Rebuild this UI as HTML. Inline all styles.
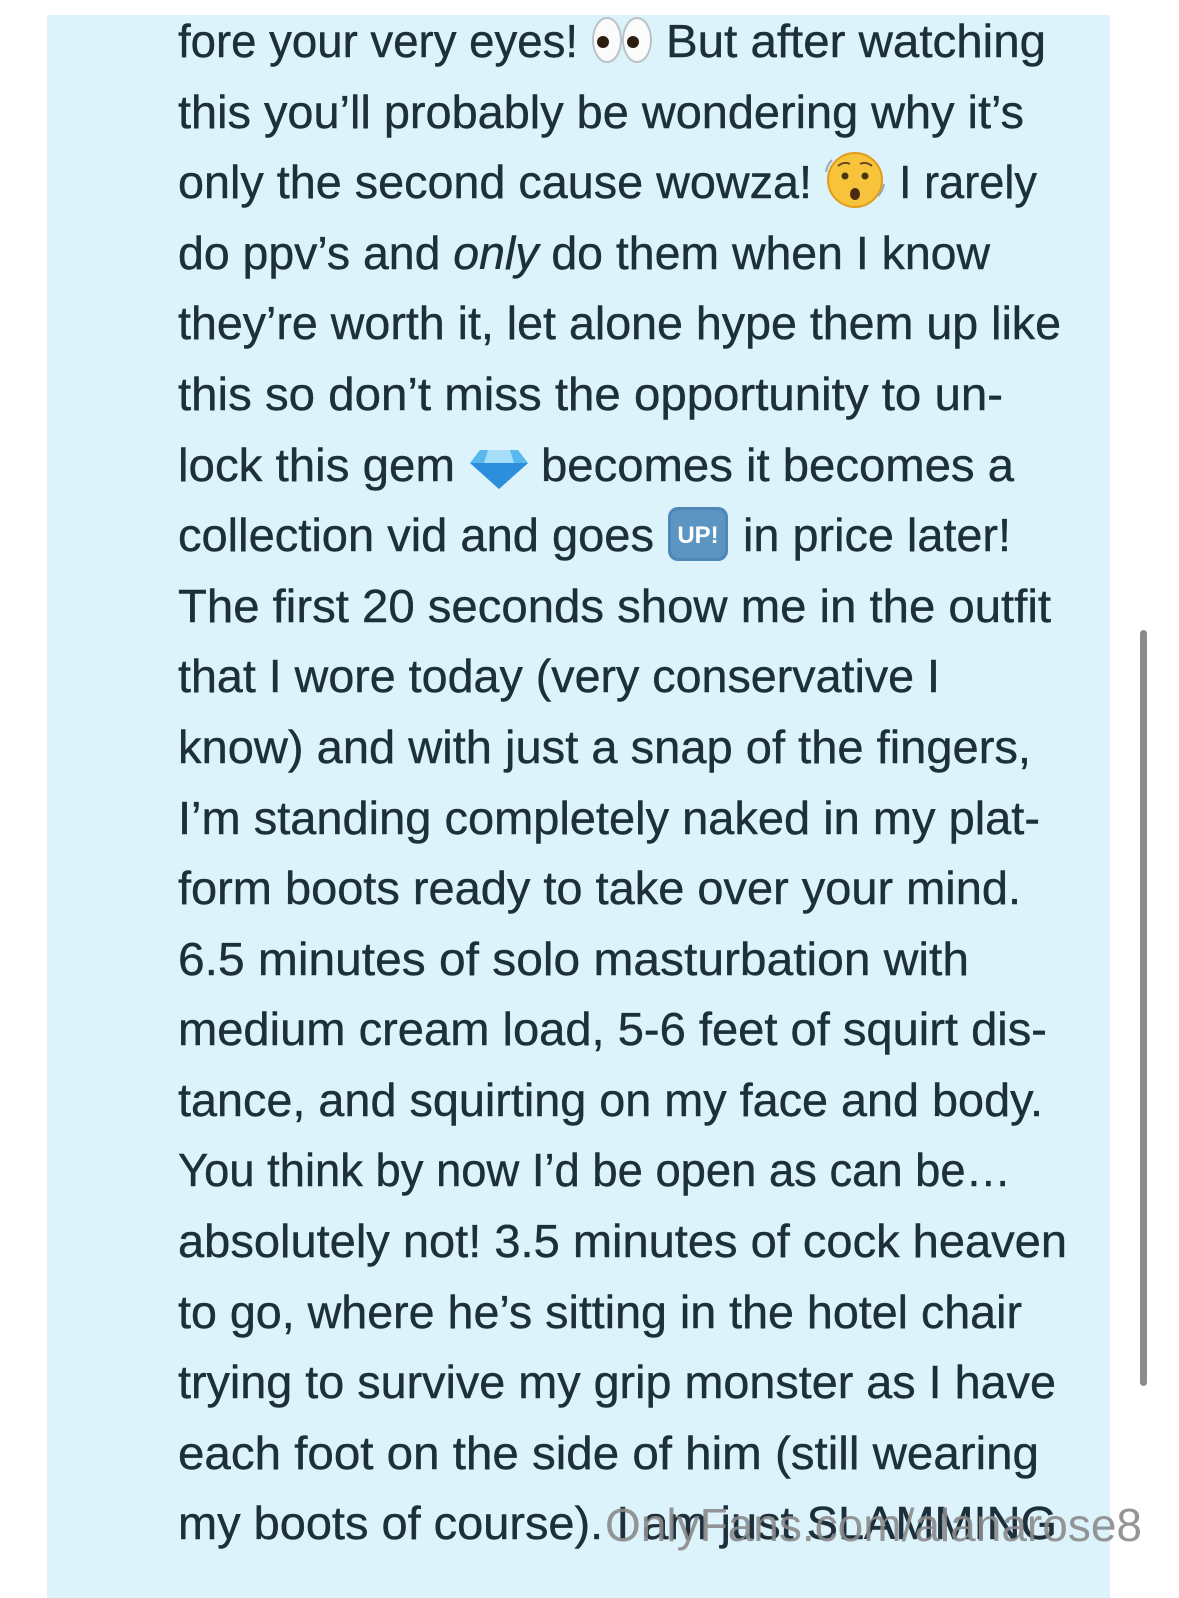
<!DOCTYPE html>
<html><head><meta charset="utf-8"><style>
html,body{margin:0;padding:0;background:#fff;}
body{width:1179px;height:1598px;overflow:hidden;position:relative;}
svg{position:absolute;left:0;top:0;}
</style></head><body>
<svg width="1179" height="1598" viewBox="0 0 1179 1598" xmlns="http://www.w3.org/2000/svg">
<rect x="47" y="15" width="1063" height="1583" fill="#dcf3fc"/>
<rect x="1140" y="630" width="7" height="756" rx="3.5" fill="#8c8c8c"/>
<g font-family="Liberation Sans, sans-serif" font-size="46" fill="#1d2f3a" stroke="#1d2f3a" stroke-width="0.4">
<text x="178" y="57" textLength="400" lengthAdjust="spacingAndGlyphs">fore your very eyes!</text>
<text x="666" y="57" textLength="380" lengthAdjust="spacingAndGlyphs">But after watching</text>
<text x="178" y="128" textLength="846" lengthAdjust="spacingAndGlyphs">this you’ll probably be wondering why it’s</text>
<text x="178" y="198" textLength="634" lengthAdjust="spacingAndGlyphs">only the second cause wowza!</text>
<text x="899" y="198" textLength="138" lengthAdjust="spacingAndGlyphs">I rarely</text>
<text x="178" y="269" textLength="812" lengthAdjust="spacingAndGlyphs">do ppv’s and <tspan font-style="italic">only</tspan> do them when I know</text>
<text x="178" y="339" textLength="883" lengthAdjust="spacingAndGlyphs">they’re worth it, let alone hype them up like</text>
<text x="178" y="410" textLength="825" lengthAdjust="spacingAndGlyphs">this so don’t miss the opportunity to un-</text>
<text x="178" y="481" textLength="277" lengthAdjust="spacingAndGlyphs">lock this gem</text>
<text x="541" y="481" textLength="473" lengthAdjust="spacingAndGlyphs">becomes it becomes a</text>
<text x="178" y="551" textLength="476" lengthAdjust="spacingAndGlyphs">collection vid and goes</text>
<text x="743" y="551" textLength="268" lengthAdjust="spacingAndGlyphs">in price later!</text>
<text x="178" y="622" textLength="873" lengthAdjust="spacingAndGlyphs">The first 20 seconds show me in the outfit</text>
<text x="178" y="692" textLength="762" lengthAdjust="spacingAndGlyphs">that I wore today (very conservative I</text>
<text x="178" y="763" textLength="853" lengthAdjust="spacingAndGlyphs">know) and with just a snap of the fingers,</text>
<text x="178" y="834" textLength="862" lengthAdjust="spacingAndGlyphs">I’m standing completely naked in my plat-</text>
<text x="178" y="904" textLength="843" lengthAdjust="spacingAndGlyphs">form boots ready to take over your mind.</text>
<text x="178" y="975" textLength="791" lengthAdjust="spacingAndGlyphs">6.5 minutes of solo masturbation with</text>
<text x="178" y="1045" textLength="869" lengthAdjust="spacingAndGlyphs">medium cream load, 5-6 feet of squirt dis-</text>
<text x="178" y="1116" textLength="865" lengthAdjust="spacingAndGlyphs">tance, and squirting on my face and body.</text>
<text x="178" y="1186" textLength="833" lengthAdjust="spacingAndGlyphs">You think by now I’d be open as can be…</text>
<text x="178" y="1257" textLength="889" lengthAdjust="spacingAndGlyphs">absolutely not! 3.5 minutes of cock heaven</text>
<text x="178" y="1328" textLength="844" lengthAdjust="spacingAndGlyphs">to go, where he’s sitting in the hotel chair</text>
<text x="178" y="1398" textLength="878" lengthAdjust="spacingAndGlyphs">trying to survive my grip monster as I have</text>
<text x="178" y="1469" textLength="861" lengthAdjust="spacingAndGlyphs">each foot on the side of him (still wearing</text>
<text x="178" y="1539" textLength="879" lengthAdjust="spacingAndGlyphs">my boots of course). I am just SLAMMING</text>
</g>
<g>
<ellipse cx="607" cy="40" rx="14" ry="22" fill="#fbfbfb" stroke="#b9c3c8" stroke-width="2"/>
<ellipse cx="637" cy="40" rx="14" ry="22" fill="#fbfbfb" stroke="#b9c3c8" stroke-width="2"/>
<circle cx="603" cy="42" r="6" fill="#2b1d10"/>
<circle cx="633" cy="42" r="6" fill="#2b1d10"/>
</g>
<g>
<circle cx="855" cy="180" r="27" fill="#f6c33a"/>
<circle cx="855" cy="180" r="27" fill="none" stroke="#e29a1f" stroke-width="2"/>
<circle cx="845" cy="176" r="3.5" fill="#4a3410"/>
<circle cx="865" cy="176" r="3.5" fill="#4a3410"/>
<ellipse cx="855" cy="194" rx="5" ry="6" fill="#4a2a10"/>
<path d="M838 166 q6 -5 12 -2 M860 164 q6 -3 12 2" stroke="#6a4a15" stroke-width="2" fill="none"/>
<path d="M832 160 q-5 5 -6 12 M878 196 q5 -5 6 -12" stroke="#9aa8b0" stroke-width="2" fill="none"/>
</g>
<g>
<polygon points="480,450 518,450 528,463 499,489 470,463" fill="#59b8f0"/>
<polygon points="470,463 528,463 499,489" fill="#2d8fdb"/>
<polygon points="488,450 510,450 514,463 484,463" fill="#a6def9"/>
</g>
<g>
<rect x="668" y="507" width="60" height="54" rx="10" fill="#4f88b6"/>
<rect x="671" y="510" width="54" height="48" rx="8" fill="#5c95c2"/>
<text x="698" y="543" font-family="Liberation Sans, sans-serif" font-size="24" font-weight="bold" fill="#fff" text-anchor="middle">UP!</text>
</g>
<text x="605" y="1541" font-family="Liberation Sans, sans-serif" font-size="46" fill="#8a8a8a" fill-opacity="0.9" textLength="537" lengthAdjust="spacingAndGlyphs">OnlyFans.com/alanarose8</text>
</svg>
</body></html>
